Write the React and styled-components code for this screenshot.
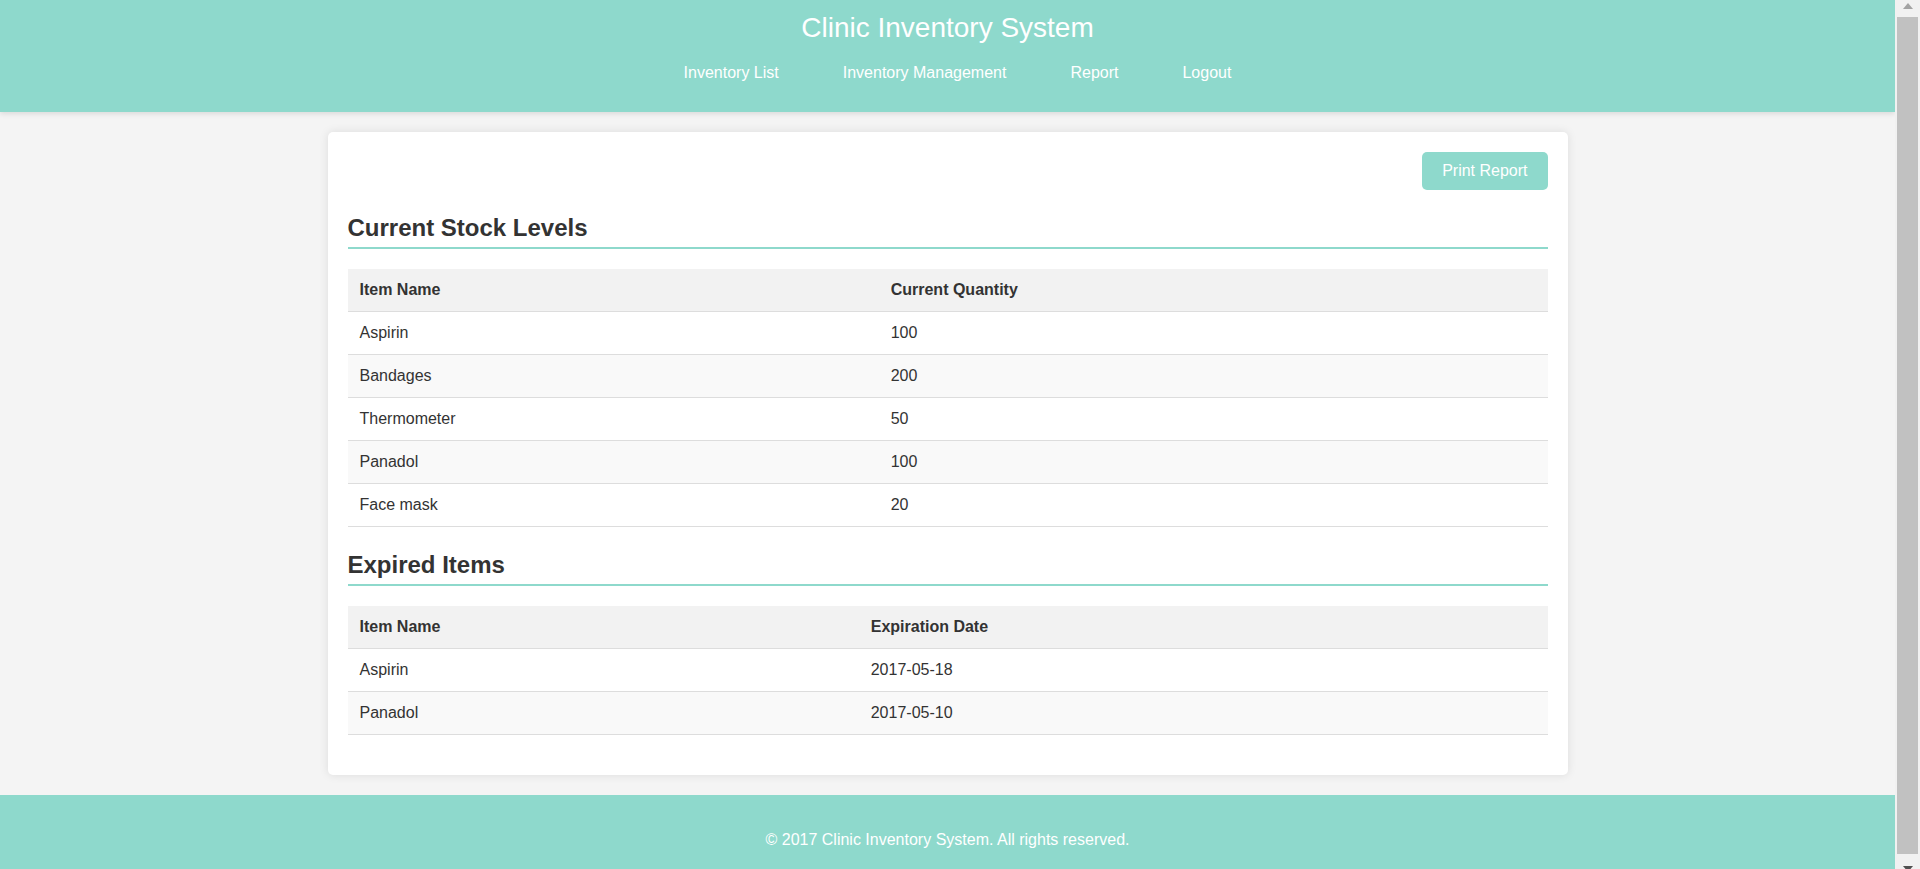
import React from "react";
import styled, { createGlobalStyle } from "styled-components";

const GlobalStyle = createGlobalStyle`
  body {
    margin: 0;
    padding-right: 25px;
    background: #f4f4f4;
    font-family: "Liberation Sans", Arial, sans-serif;
    font-size: 16px;
    color: #333;
  }
  * {
    box-sizing: border-box;
  }
`;

const Header = styled.header`
  background: #8ed9cc;
  color: #fff;
  padding: 12px 0 30px;
  text-align: center;
  box-shadow: 0 2px 5px rgba(0, 0, 0, 0.1);
  position: relative;
`;

const Title = styled.h1`
  margin: 0;
  font-size: 28px;
  font-weight: normal;
  line-height: 32px;
`;

const Nav = styled.nav`
  display: flex;
  justify-content: center;
  gap: 64px;
  margin-top: 20px;
  padding-left: 20px;
`;

const NavLink = styled.a`
  color: #fff;
  text-decoration: none;
  font-size: 16px;
  line-height: 18px;
`;

const Card = styled.main`
  max-width: 1240px;
  margin: 20px auto;
  padding: 20px;
  background: #fff;
  border-radius: 5px;
  box-shadow: 0 0 10px rgba(0, 0, 0, 0.1);
`;

const Actions = styled.div`
  display: flex;
  justify-content: flex-end;
`;

const PrintButton = styled.button`
  font-family: "Liberation Sans", Arial, sans-serif;
  font-size: 16px;
  line-height: 18px;
  color: #fff;
  background: #8ed9cc;
  border: none;
  border-radius: 5px;
  padding: 10px 20px;
  cursor: pointer;
`;

const SectionTitle = styled.h2`
  margin: 24px 0 20px;
  padding-bottom: 5px;
  font-size: 24px;
  line-height: 28px;
  font-weight: bold;
  color: #333;
  border-bottom: 2px solid #8ed9cc;
`;

const Table = styled.table`
  width: 100%;
  border-collapse: collapse;
  margin-bottom: 20px;
`;

const Row = styled.tr`
  background: ${(p) => (p.$striped ? "#f9f9f9" : "#fff")};
`;

const HeadCell = styled.th`
  text-align: left;
  padding: 12px;
  line-height: 18px;
  font-weight: bold;
  background: #f2f2f2;
  border-bottom: 1px solid #ddd;
`;

const Cell = styled.td`
  text-align: left;
  padding: 12px;
  line-height: 18px;
  border-bottom: 1px solid #ddd;
`;

const Footer = styled.footer`
  background: #8ed9cc;
  color: #fff;
  text-align: center;
  padding: 20px;
`;

const FooterText = styled.p`
  margin: 16px 0;
  line-height: 18px;
`;

/* Fake browser scrollbar, drawn over the right edge of the window */
const ScrollBar = styled.div`
  position: fixed;
  top: 0;
  right: 0;
  width: 25px;
  height: 100vh;
  background: #f1f1f1;
  display: flex;
  flex-direction: column;
  align-items: stretch;
`;

const ScrollButton = styled.div`
  height: ${(p) => p.$height}px;
  flex: none;
  display: flex;
  justify-content: center;
  align-items: flex-start;
  padding-top: ${(p) => p.$offset}px;
  overflow: hidden;
`;

const Arrow = styled.span`
  width: 0;
  height: 0;
  border-left: 5.5px solid transparent;
  border-right: 5.5px solid transparent;
  ${(p) =>
    p.$down
      ? `border-top: 6px solid ${p.$color};`
      : `border-bottom: 6px solid ${p.$color};`}
`;

const Thumb = styled.div`
  flex: 1;
  margin: 0 2px;
  background: #c1c1c1;
`;

const stock = [
  ["Aspirin", "100"],
  ["Bandages", "200"],
  ["Thermometer", "50"],
  ["Panadol", "100"],
  ["Face mask", "20"],
];

const expired = [
  ["Aspirin", "2017-05-18"],
  ["Panadol", "2017-05-10"],
];

function DataTable({ headers, rows }) {
  return (
    <Table>
      <thead>
        <tr>
          {headers.map((h) => (
            <HeadCell key={h}>{h}</HeadCell>
          ))}
        </tr>
      </thead>
      <tbody>
        {rows.map((r, i) => (
          <Row key={i} $striped={i % 2 === 1}>
            {r.map((c, j) => (
              <Cell key={j}>{c}</Cell>
            ))}
          </Row>
        ))}
      </tbody>
    </Table>
  );
}

export default function App() {
  return (
    <>
      <GlobalStyle />
      <Header>
        <Title>Clinic Inventory System</Title>
        <Nav>
          <NavLink href="#">Inventory List</NavLink>
          <NavLink href="#">Inventory Management</NavLink>
          <NavLink href="#">Report</NavLink>
          <NavLink href="#">Logout</NavLink>
        </Nav>
      </Header>
      <Card>
        <Actions>
          <PrintButton>Print Report</PrintButton>
        </Actions>
        <SectionTitle>Current Stock Levels</SectionTitle>
        <DataTable headers={["Item Name", "Current Quantity"]} rows={stock} />
        <SectionTitle>Expired Items</SectionTitle>
        <DataTable headers={["Item Name", "Expiration Date"]} rows={expired} />
      </Card>
      <Footer>
        <FooterText>© 2017 Clinic Inventory System. All rights reserved.</FooterText>
      </Footer>
      <ScrollBar aria-hidden="true">
        <ScrollButton $height={17} $offset={3}>
          <Arrow $color="#a3a3a3" />
        </ScrollButton>
        <Thumb />
        <ScrollButton $height={15} $offset={12}>
          <Arrow $down $color="#505050" />
        </ScrollButton>
      </ScrollBar>
    </>
  );
}
